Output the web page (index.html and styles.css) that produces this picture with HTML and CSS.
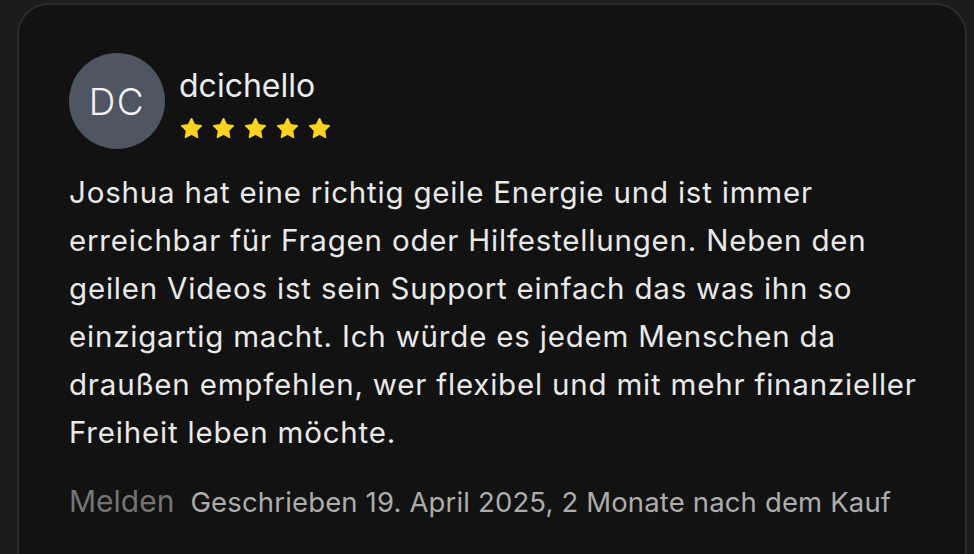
FILE: index.html
```html
<!DOCTYPE html>
<html lang="de">
<head>
    <meta charset="UTF-8">
    <meta name="viewport" content="width=device-width, initial-scale=1.0">
    <title>Bewertung</title>
    <link rel="stylesheet" href="styles.css">
</head>
<body>
    <div class="review">
        <div class="review-head">
            <div class="avatar">DC</div>
            <div class="author">
                <div class="name">dcichello</div>
                <div class="stars">
                    <svg viewBox="0 0 24 24"><path d="M12 2.6l2.9 5.9 6.5.9-4.7 4.6 1.1 6.5L12 17.4l-5.8 3.1 1.1-6.5-4.7-4.6 6.5-.9z"/></svg>
                    <svg viewBox="0 0 24 24"><path d="M12 2.6l2.9 5.9 6.5.9-4.7 4.6 1.1 6.5L12 17.4l-5.8 3.1 1.1-6.5-4.7-4.6 6.5-.9z"/></svg>
                    <svg viewBox="0 0 24 24"><path d="M12 2.6l2.9 5.9 6.5.9-4.7 4.6 1.1 6.5L12 17.4l-5.8 3.1 1.1-6.5-4.7-4.6 6.5-.9z"/></svg>
                    <svg viewBox="0 0 24 24"><path d="M12 2.6l2.9 5.9 6.5.9-4.7 4.6 1.1 6.5L12 17.4l-5.8 3.1 1.1-6.5-4.7-4.6 6.5-.9z"/></svg>
                    <svg viewBox="0 0 24 24"><path d="M12 2.6l2.9 5.9 6.5.9-4.7 4.6 1.1 6.5L12 17.4l-5.8 3.1 1.1-6.5-4.7-4.6 6.5-.9z"/></svg>
                </div>
            </div>
        </div>
        <p class="review-text">Joshua hat eine richtig geile Energie und ist immer erreichbar für Fragen oder Hilfestellungen. Neben den geilen Videos ist sein Support einfach das was ihn so einzigartig macht. Ich würde es jedem Menschen da draußen empfehlen, wer flexibel und mit mehr finanzieller Freiheit leben möchte.</p>
        <div class="review-foot">
            <span class="report">Melden</span>
            <span class="meta">Geschrieben 19. April 2025, 2 Monate nach dem Kauf</span>
        </div>
    </div>
</body>
</html>
```

FILE: styles.css
```css
html, body {
    margin: 0;
    height: 100%;
    overflow: hidden;
}
body {
    background-color: #1c1c1c;
    font-family: Inter, "Noto Sans", sans-serif;
    color: #e9e9e9;
}
.review {
    margin: 3px 7px 0 17px;
    height: 580px;
    box-sizing: border-box;
    background: #121212;
    border: 2px solid #2b2b2b;
    border-radius: 32px;
    padding: 48px 30px 0 50px;
}
.review-head {
    display: flex;
    align-items: flex-start;
    gap: 14px;
}
.avatar {
    width: 96px;
    height: 96px;
    border-radius: 50%;
    background: #4f5661;
    color: #f2f2f2;
    font-size: 37px;
    font-weight: 300;
    display: flex;
    align-items: center;
    justify-content: center;
    letter-spacing: 1.5px;
}
.author {
    padding-top: 14px;
}
.name {
    font-size: 32px;
    line-height: 38px;
    color: #ececec;
}
.stars {
    display: flex;
    gap: 7px;
    margin-top: 11px;
}
.stars svg {
    width: 25px;
    height: 25px;
    fill: #fdd21d;
    stroke: #fdd21d;
    stroke-width: 1.5;
    stroke-linejoin: round;
}
.review-text {
    margin: 19px 0 0;
    font-size: 29.5px;
    line-height: 48px;
    letter-spacing: 0.8px;
    color: #e9e9e9;
}
.review-foot {
    display: flex;
    align-items: baseline;
    gap: 16px;
    margin-top: 27px;
}
.report {
    font-size: 30px;
    color: #747474;
}
.meta {
    font-size: 27.5px;
    letter-spacing: 0.15px;
    color: #acacac;
}
```
